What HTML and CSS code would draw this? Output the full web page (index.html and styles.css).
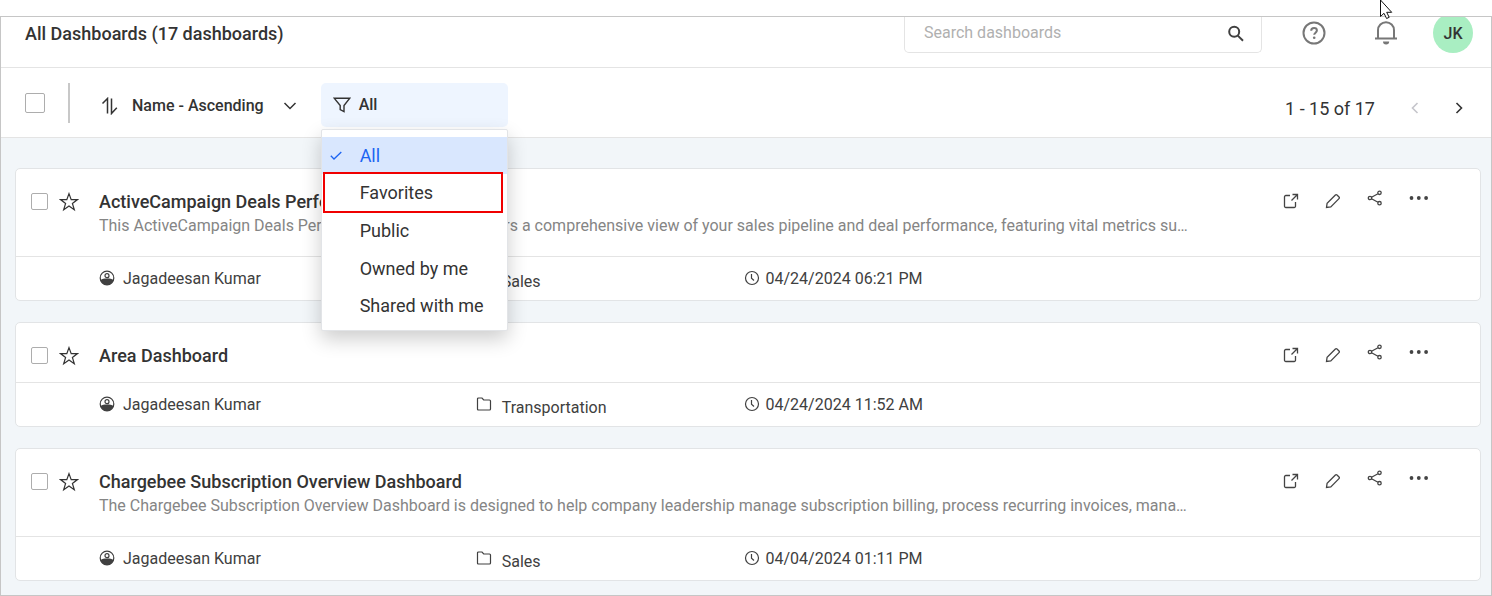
FILE: index.html
```html
<!DOCTYPE html>
<html lang="en">
<head>
<meta charset="utf-8">
<meta name="viewport" content="width=device-width, initial-scale=1">
<title>All Dashboards</title>
<link rel="stylesheet" href="styles.css">
</head>
<body>
<svg class="sprite" aria-hidden="true">
  <symbol id="i-star" viewBox="0 0 20 20"><path d="M10 1.600l2.200 6h6.200l-5 3.800 1.900 6.300-5.300-3.800-5.300 3.800 1.900-6.300-5-3.800h6.200z"/></symbol>
  <symbol id="i-open" viewBox="0 0 16 16"><path d="M7 2.500H2.800A1.300 1.300 0 0 0 1.500 3.800v9.400A1.300 1.300 0 0 0 2.800 14.500h8.400A1.300 1.300 0 0 0 12.500 13.200V9M9.500 1.500h5v5M14.500 1.500L8.500 7.500"/></symbol>
  <symbol id="i-edit" viewBox="0 0 16 16"><path d="M1.500 14.500l.6-4.300 8.300-8.200q.8-.8 1.600 0l2 2q.8.800 0 1.600l-8.200 8.300z"/></symbol>
  <symbol id="i-share" viewBox="0 0 16 16"><circle cx="3" cy="8" r="1.700"/><circle cx="12.500" cy="2.800" r="1.700"/><circle cx="12.500" cy="13.200" r="1.700"/><path d="M4.500 7.200L11 3.700M4.500 8.800L11 12.300"/></symbol>
  <symbol id="i-more" viewBox="0 0 20 6"><circle cx="2.500" cy="3" r="1.900"/><circle cx="9.800" cy="3" r="1.900"/><circle cx="17.100" cy="3" r="1.900"/></symbol>
  <symbol id="i-user" viewBox="0 0 16 16"><circle cx="8" cy="8" r="6.800"/><circle cx="8" cy="5.700" r="2"/><path class="solid" d="M1.500 10c1.800-1 3.500-1.400 6.500-1.400s4.700.4 6.500 1.400c-.8 3-3.500 5-6.500 5s-5.700-2-6.500-5z"/></symbol>
  <symbol id="i-folder" viewBox="0 0 16 16"><path d="M1.500 13V3q0-1 1-1H6l1.700 2h5.800q1 0 1 1v8q0 1-1 1h-11q-1 0-1-1z"/></symbol>
  <symbol id="i-clock" viewBox="0 0 16 16"><circle cx="8" cy="8" r="6.500"/><path d="M7.500 4v4.300l2.500 2.200"/></symbol>
</svg>

<main class="frame">
  <header class="topbar">
    <h1 class="page-title">All Dashboards (17 dashboards)</h1>
    <form class="search" role="search">
      <input class="search-input" type="search" placeholder="Search dashboards" aria-label="Search dashboards">
      <button class="search-button" type="button" aria-label="Search">
        <svg width="18" height="18" viewBox="0 0 18 18"><circle cx="7.200" cy="6.800" r="5"/><path d="M10.800 10.600L16 15.800"/></svg>
      </button>
    </form>
    <button class="icon-button" type="button" aria-label="Help">
      <svg width="24" height="24" viewBox="0 0 24 24"><circle cx="12" cy="12" r="10.500"/><path d="M9.200 9.800c0-3.800 5.700-3.500 5.700-.3 0 2-2.700 2.300-2.700 4.300"/><circle class="dot" cx="12.200" cy="16.800" r="1.300"/></svg>
    </button>
    <button class="icon-button" type="button" aria-label="Notifications">
      <svg width="24" height="24" viewBox="0 0 24 24"><path d="M1 17.500h22M4 17.500V9.200a8 8 0 0 1 16 0v8.300"/><path class="dot" d="M9 20.500h6.200a3.100 3 0 0 1-6.200 0z"/></svg>
    </button>
    <button class="avatar" type="button">JK</button>
  </header>

  <section class="toolbar" aria-label="List controls">
    <input class="check check-all" type="checkbox" aria-label="Select all dashboards">
    <span class="separator"></span>
    <button class="sort" type="button">
      <svg width="18" height="18" viewBox="0 0 18 18"><path d="M1.500 6.500L6.500 1.500V16.500M10.500 1.500V16.500L15.800 10.800"/></svg>
      <span class="sort-label">Name - Ascending</span>
      <svg width="14" height="8" viewBox="0 0 14 8"><path class="chevron" d="M1.500 1l5.500 5.500L12.500 1"/></svg>
    </button>
    <div class="filter">
      <button class="filter-button" type="button" aria-haspopup="listbox" aria-expanded="true">
        <svg width="18" height="16" viewBox="0 0 18 16"><path d="M1.200 1.200h15.600L11 8.500V14.500L7.200 12.500V8.500z"/></svg>
        <span>All</span>
      </button>
      <div class="menu">
        <button class="option option-active" type="button">
          <svg width="12" height="9" viewBox="0 0 12 9"><path d="M.8 4.800l3.200 3.200L11.300 1"/></svg>
          All
        </button>
        <button class="option" type="button">Favorites</button>
        <button class="option" type="button">Public</button>
        <button class="option" type="button">Owned by me</button>
        <button class="option" type="button">Shared with me</button>
        <span class="highlight"></span>
      </div>
    </div>
    <nav class="pager" aria-label="Pages">
      <span>1 - 15 of 17</span>
      <button class="page-button" type="button" aria-label="Previous page" disabled><svg width="8" height="12" viewBox="0 0 8 12"><path d="M6.500 1L1.500 6l5 5"/></svg></button>
      <button class="page-button" type="button" aria-label="Next page"><svg width="8" height="12" viewBox="0 0 8 12"><path d="M1.500 1l5 5-5 5"/></svg></button>
    </nav>
  </section>

  <section class="list" aria-label="Dashboards">
    <article class="card">
      <div class="card-head">
        <input class="check" type="checkbox" aria-label="Select ActiveCampaign Deals Performance Dashboard">
        <button class="star" type="button" aria-label="Add to favorites"><svg width="20" height="20"><use href="#i-star"/></svg></button>
        <div class="card-text">
          <h2 class="card-title">ActiveCampaign Deals Performance Dashboard</h2>
          <p class="card-desc">This ActiveCampaign Deals Performance Dashboard offers a comprehensive view of your sales pipeline and deal performance, featuring vital metrics su…</p>
        </div>
        <div class="actions">
          <button class="action action-low" type="button" aria-label="Open"><svg width="16" height="16"><use href="#i-open"/></svg></button>
          <button class="action action-low" type="button" aria-label="Edit"><svg width="16" height="16"><use href="#i-edit"/></svg></button>
          <button class="action" type="button" aria-label="Share"><svg width="16" height="16"><use href="#i-share"/></svg></button>
          <button class="action action-more" type="button" aria-label="More"><svg width="20" height="6"><use href="#i-more"/></svg></button>
        </div>
      </div>
      <div class="meta">
        <span class="meta-item"><svg width="16" height="16"><use href="#i-user"/></svg>Jagadeesan Kumar</span>
        <span class="meta-item"><svg width="16" height="16"><use href="#i-folder"/></svg><span class="category">Sales</span></span>
        <span class="meta-item meta-date"><svg width="16" height="16"><use href="#i-clock"/></svg>04/24/2024 06:21 PM</span>
      </div>
    </article>

    <article class="card">
      <div class="card-head">
        <input class="check" type="checkbox" aria-label="Select Area Dashboard">
        <button class="star" type="button" aria-label="Add to favorites"><svg width="20" height="20"><use href="#i-star"/></svg></button>
        <div class="card-text">
          <h2 class="card-title">Area Dashboard</h2>
        </div>
        <div class="actions">
          <button class="action action-low" type="button" aria-label="Open"><svg width="16" height="16"><use href="#i-open"/></svg></button>
          <button class="action action-low" type="button" aria-label="Edit"><svg width="16" height="16"><use href="#i-edit"/></svg></button>
          <button class="action" type="button" aria-label="Share"><svg width="16" height="16"><use href="#i-share"/></svg></button>
          <button class="action action-more" type="button" aria-label="More"><svg width="20" height="6"><use href="#i-more"/></svg></button>
        </div>
      </div>
      <div class="meta">
        <span class="meta-item"><svg width="16" height="16"><use href="#i-user"/></svg>Jagadeesan Kumar</span>
        <span class="meta-item"><svg width="16" height="16"><use href="#i-folder"/></svg><span class="category">Transportation</span></span>
        <span class="meta-item meta-date"><svg width="16" height="16"><use href="#i-clock"/></svg>04/24/2024 11:52 AM</span>
      </div>
    </article>

    <article class="card">
      <div class="card-head">
        <input class="check" type="checkbox" aria-label="Select Chargebee Subscription Overview Dashboard">
        <button class="star" type="button" aria-label="Add to favorites"><svg width="20" height="20"><use href="#i-star"/></svg></button>
        <div class="card-text">
          <h2 class="card-title">Chargebee Subscription Overview Dashboard</h2>
          <p class="card-desc">The Chargebee Subscription Overview Dashboard is designed to help company leadership manage subscription billing, process recurring invoices, mana…</p>
        </div>
        <div class="actions">
          <button class="action action-low" type="button" aria-label="Open"><svg width="16" height="16"><use href="#i-open"/></svg></button>
          <button class="action action-low" type="button" aria-label="Edit"><svg width="16" height="16"><use href="#i-edit"/></svg></button>
          <button class="action" type="button" aria-label="Share"><svg width="16" height="16"><use href="#i-share"/></svg></button>
          <button class="action action-more" type="button" aria-label="More"><svg width="20" height="6"><use href="#i-more"/></svg></button>
        </div>
      </div>
      <div class="meta">
        <span class="meta-item"><svg width="16" height="16"><use href="#i-user"/></svg>Jagadeesan Kumar</span>
        <span class="meta-item"><svg width="16" height="16"><use href="#i-folder"/></svg><span class="category">Sales</span></span>
        <span class="meta-item meta-date"><svg width="16" height="16"><use href="#i-clock"/></svg>04/04/2024 01:11 PM</span>
      </div>
    </article>
  </section>
</main>
<svg class="pointer" width="14" height="20" viewBox="0 0 14 20" aria-hidden="true"><path d="M1.500 0v16.500l3.500-3.200 2.600 5.200 2.600-1.200-2.500-5h5z"/></svg>
</body>
</html>
```

FILE: styles.css
```css
* {
  box-sizing: border-box;
}

body {
  margin: 0;
  padding-top: 16px;
  min-height: 100vh;
  display: flex;
  flex-direction: column;
  background: #fff;
  color: #333;
  font-family: Roboto, "Liberation Sans", sans-serif;
  font-size: 16px;
}

h1, h2, p {
  margin: 0;
}

button {
  border: 0;
  padding: 0;
  background: none;
  color: inherit;
  font: inherit;
}

svg {
  display: block;
  flex: none;
  fill: none;
  stroke: currentColor;
}

.sprite {
  position: absolute;
  width: 0;
  height: 0;
}

.solid {
  fill: currentColor;
  stroke: none;
}

.frame {
  flex: 1;
  display: flex;
  flex-direction: column;
  border: 1px solid #c6c6c6;
}

/* Top bar */
.topbar {
  display: flex;
  align-items: flex-start;
  overflow: hidden;
  padding: 0 18px 14px 24px;
  border-bottom: 1px solid #e4e4e4;
}

.page-title {
  flex: 1;
  font-size: 18px;
  font-weight: 500;
  line-height: 34px;
}

.search {
  display: flex;
  flex: none;
  width: 24%;
  min-width: 358px;
  height: 36px;
  border: 1px solid #e4e4e4;
  border-top: 0;
  border-radius: 0 0 5px 5px;
}

.search-input {
  flex: 1;
  min-width: 0;
  padding: 0 0 4px 19px;
  border: 0;
  background: none;
  font: inherit;
}

.search-input::placeholder {
  color: #b0b0b0;
}

.search-button {
  width: 50px;
  padding-bottom: 2px;
  color: #404040;
  stroke-width: 2;
}

.search-button svg {
  margin-left: 16px;
}

.icon-button {
  margin: 4px 0 0 40px;
  color: #777;
  stroke-width: 2;
}

.icon-button + .icon-button {
  margin-left: 48px;
}

.dot {
  fill: currentColor;
  stroke: none;
}

.avatar {
  width: 40px;
  height: 40px;
  margin: -4px 0 0 35px;
  border-radius: 50%;
  background: #a9eec2;
  font-weight: 500;
}

/* Toolbar */
.toolbar {
  display: flex;
  align-items: center;
  height: 70px;
  padding: 0 24px;
  border-bottom: 1px solid #e4e4e4;
}

.check {
  appearance: none;
  flex: none;
  width: 17px;
  height: 17px;
  margin: 0;
  border: 1px solid #adadad;
  border-radius: 2px;
  background: #fff;
}

.check-all {
  width: 20px;
  height: 20px;
}

.separator {
  width: 2px;
  height: 40px;
  margin: 0 31px 0 23px;
  background: #c8c8c8;
}

.sort {
  display: flex;
  align-items: center;
  gap: 13px;
  padding-top: 6px;
  font-weight: 500;
  stroke-width: 1.5;
}

.sort-label {
  padding-right: 6px;
}

.filter {
  position: relative;
  width: 187px;
  margin: 4px 0 0 24px;
}

.filter-button {
  display: flex;
  align-items: center;
  gap: 8px;
  width: 100%;
  height: 44px;
  padding-left: 12px;
  border-radius: 5px;
  background: #eef5ff;
  font-weight: 500;
  stroke-width: 1.4;
}

.menu {
  position: absolute;
  z-index: 2;
  top: 46px;
  left: 0;
  display: flex;
  flex-direction: column;
  width: 100%;
  height: 202px;
  padding: 7px 0 5px;
  border: 1px solid #e2e4e7;
  border-radius: 2px;
  background: #fff;
  box-shadow: 0 8px 20px rgba(0, 0, 0, 0.2);
}

.option {
  position: relative;
  flex: 1;
  padding-left: 38px;
  font-size: 18px;
  text-align: left;
}

.option-active {
  background: #d9e7fe;
  color: #1c64f2;
}

.option svg {
  position: absolute;
  top: 14px;
  left: 8px;
  stroke-width: 1.3;
}

.highlight {
  position: absolute;
  top: 42px;
  left: 1px;
  right: 4px;
  height: 41px;
  border: 2px solid #f00000;
}

.pager {
  display: flex;
  align-items: center;
  margin-left: auto;
  padding: 12px 4px 0 0;
  font-size: 18px;
}

.page-button {
  margin-left: 36px;
  padding-bottom: 2px;
  stroke-width: 1.6;
}

.page-button:disabled {
  color: #c5c5cb;
}

/* Cards */
.list {
  flex: 1;
  display: flex;
  flex-direction: column;
  gap: 21px;
  padding: 30px 10px 14px 14px;
  background: #f2f6f9;
}

.card {
  border: 1px solid #e2e4e6;
  border-radius: 5px;
  background: #fff;
}

.card-head {
  display: flex;
  align-items: flex-start;
  padding: 20px 51px 14px 15px;
  border-bottom: 1px solid #e4e4e4;
}

.card-head .check {
  margin-top: 4px;
}

.star {
  margin: 3px 20px 0 11px;
  stroke-width: 1.2;
}

.card-text {
  flex: 1;
  min-width: 0;
}

.card-title {
  padding-top: 1px;
  font-size: 18px;
  font-weight: 500;
  line-height: 24px;
}

.card-desc {
  overflow: hidden;
  padding-bottom: 4px;
  color: #858585;
  line-height: 24px;
  text-overflow: ellipsis;
  white-space: nowrap;
}

.actions {
  display: flex;
  align-items: flex-start;
  gap: 26px;
  color: #444;
  stroke-width: 1.3;
}

.action {
  height: 24px;
  padding-bottom: 6px;
}

.action-low {
  padding: 4px 0 4px;
}

.action-more svg {
  fill: currentColor;
  stroke: none;
}

.meta {
  display: grid;
  grid-template-columns: 377fr 268fr 737fr;
  padding: 0 0 1px 83px;
}

.meta-item {
  display: flex;
  align-items: center;
  gap: 8px;
  height: 42px;
  color: #404040;
  stroke-width: 1.2;
}

.category {
  padding: 6px 0 0 2px;
}

.meta-date {
  gap: 6px;
}

.pointer {
  position: absolute;
  top: 0;
  left: 1379px;
  z-index: 3;
  fill: #fff;
  stroke: #111;
}
```
